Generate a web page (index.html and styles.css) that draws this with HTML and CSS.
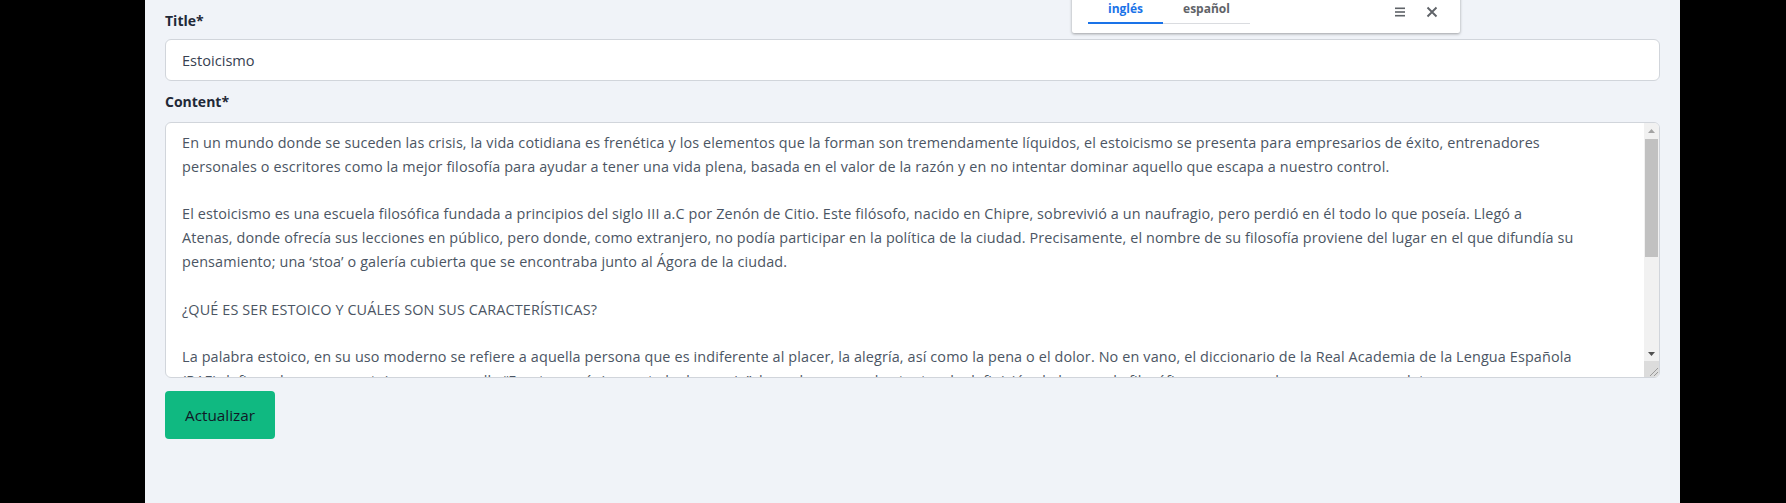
FILE: index.html
```html
<!DOCTYPE html>
<html lang="es">
<head>
<meta charset="utf-8">
<title>Editar post</title>
<link rel="stylesheet" href="styles.css">
</head>
<body>
<div class="panel">
  <form class="form">
    <div class="field">
      <label class="label" for="title">Title*</label>
      <input class="input" id="title" type="text" value="Estoicismo">
    </div>
    <div class="field">
      <label class="label" for="content">Content*</label>
      <div class="textarea-wrap">
        <textarea class="textarea" id="content" wrap="off">En un mundo donde se suceden las crisis, la vida cotidiana es frenética y los elementos que la forman son tremendamente líquidos, el estoicismo se presenta para empresarios de éxito, entrenadores
personales o escritores como la mejor filosofía para ayudar a tener una vida plena, basada en el valor de la razón y en no intentar dominar aquello que escapa a nuestro control.

El estoicismo es una escuela filosófica fundada a principios del siglo III a.C por Zenón de Citio. Este filósofo, nacido en Chipre, sobrevivió a un naufragio, pero perdió en él todo lo que poseía. Llegó a
Atenas, donde ofrecía sus lecciones en público, pero donde, como extranjero, no podía participar en la política de la ciudad. Precisamente, el nombre de su filosofía proviene del lugar en el que difundía su
pensamiento; una ‘stoa’ o galería cubierta que se encontraba junto al Ágora de la ciudad.

¿QUÉ ES SER ESTOICO Y CUÁLES SON SUS CARACTERÍSTICAS?

La palabra estoico, en su uso moderno se refiere a aquella persona que es indiferente al placer, la alegría, así como la pena o el dolor. No en vano, el diccionario de la Real Academia de la Lengua Española
(RAE) define a la persona estoica como aquella “Fuerte, ecuánime ante la desgracia”, lo cual se acerca bastante a la definición de la escuela filosófica, aunque no la recoge por completo.

Para los estoicos, la virtud es el único bien verdadero y la felicidad consiste en vivir de acuerdo con la naturaleza y la razón,
aceptando con serenidad aquello que no depende de nosotros y actuando con firmeza sobre lo que sí está a nuestro alcance.

Entre sus principales representantes se encuentran Séneca, Epicteto y el emperador Marco Aurelio, cuyas obras siguen
siendo leídas hoy en día por quienes buscan una guía práctica para afrontar las dificultades de la vida,
y cuyas enseñanzas se resumen en distinguir entre lo que depende de nosotros y lo que no.</textarea>
        <div class="scrollbar" aria-hidden="true">
          <div class="sb-btn">
            <svg width="7" height="4" viewBox="0 0 7 4"><path d="M0 4 L3.5 0 L7 4 Z" fill="#a3a3a3"/></svg>
          </div>
          <div class="sb-track">
            <div class="sb-thumb"></div>
          </div>
          <div class="sb-btn">
            <svg width="7" height="4" viewBox="0 0 7 4"><path d="M0 0 L7 0 L3.5 4 Z" fill="#505050"/></svg>
          </div>
          <div class="sb-corner">
            <svg width="15" height="16" viewBox="0 0 15 16"><path d="M14 7 L6 15 M14 11 L10 15" stroke="#9a9a9a" stroke-width="1" fill="none"/></svg>
          </div>
        </div>
      </div>
    </div>
    <div class="actions">
      <button class="btn" type="button">Actualizar</button>
    </div>
  </form>

  <div class="translate">
    <div class="tabs">
      <span class="tab tab-active">inglés</span>
      <span class="tab">español</span>
    </div>
    <div class="tools">
      <svg class="icon" width="12" height="12" viewBox="0 0 12 12" aria-hidden="true">
        <rect x="1" y="1.5" width="10" height="1.6" fill="#5f6368"/>
        <rect x="1" y="5.2" width="10" height="1.6" fill="#5f6368"/>
        <rect x="1" y="8.9" width="10" height="1.6" fill="#5f6368"/>
      </svg>
      <svg class="icon" width="12" height="12" viewBox="0 0 12 12" aria-hidden="true">
        <path d="M1.5 1.5 L10.5 10.5 M10.5 1.5 L1.5 10.5" stroke="#5f6368" stroke-width="1.9" fill="none"/>
      </svg>
    </div>
  </div>
</div>
</body>
</html>
```
FILE: styles.css
```css
html, body {
  margin: 0;
  padding: 0;
  height: 100%;
}

body {
  background: #000;
  font-family: "Open Sans", "Noto Sans", sans-serif;
  overflow: hidden;
}

.panel {
  position: relative;
  margin-left: 145px;
  width: 1535px;
  height: 503px;
  background: #f0f3f8;
  box-sizing: border-box;
  padding: 11px 20px 0 20px;
}

.form {
  display: flex;
  flex-direction: column;
}

.field {
  display: flex;
  flex-direction: column;
  margin-bottom: 11px;
}

.label {
  font-size: 14px;
  line-height: 20px;
  font-weight: 700;
  color: #1f2937;
  margin-bottom: 8px;
}

.field + .field .label {
  margin-bottom: 10px;
}

.input {
  display: block;
  box-sizing: border-box;
  height: 42px;
  width: 100%;
  margin: 0;
  padding: 0 16px;
  border: 1px solid #d1d5db;
  border-radius: 6px;
  background: #fff;
  font-family: "Open Sans", "Noto Sans", sans-serif;
  font-size: 14.6px;
  color: #374151;
  outline: none;
}

.textarea-wrap {
  position: relative;
}

.textarea {
  display: block;
  box-sizing: border-box;
  width: 100%;
  height: 256px;
  margin: 0;
  padding: 8px 31px 8px 16px;
  border: 1px solid #d1d5db;
  border-radius: 6px;
  background: #fff;
  font-family: "Open Sans", "Noto Sans", sans-serif;
  font-size: 14.4px;
  letter-spacing: 0.13px;
  line-height: 23.8px;
  color: #4b5563;
  white-space: pre;
  overflow: hidden;
  resize: none;
  outline: none;
}

.scrollbar {
  position: absolute;
  top: 1px;
  right: 1px;
  bottom: 1px;
  width: 15px;
  display: flex;
  flex-direction: column;
  background: #f1f1f1;
  border-top-right-radius: 5px;
  border-bottom-right-radius: 5px;
  overflow: hidden;
}

.sb-btn {
  height: 15px;
  flex: none;
  display: flex;
  align-items: center;
  justify-content: center;
}

.sb-btn svg {
  display: block;
}

.sb-track {
  flex: 1;
  padding: 1px 1px 0 1px;
}

.sb-thumb {
  height: 118px;
  background: #c1c1c1;
}

.sb-corner {
  height: 16px;
  flex: none;
  background: #dcdcdc;
}

.sb-corner svg {
  display: block;
}

.actions {
  display: flex;
  margin-top: 2px;
}

.btn {
  height: 48px;
  padding: 0 20px;
  border: none;
  border-radius: 4px;
  background: #10b981;
  color: #111827;
  font-family: "Open Sans", "Noto Sans", sans-serif;
  font-size: 15.3px;
  cursor: pointer;
}

.translate {
  position: absolute;
  top: -10px;
  left: 927px;
  width: 388px;
  height: 43px;
  box-sizing: border-box;
  padding: 10px 16px 0 16px;
  background: #fff;
  border-radius: 0 0 2px 2px;
  box-shadow: 0 1px 3px rgba(0, 0, 0, 0.35);
  display: flex;
  align-items: flex-start;
  justify-content: space-between;
}

.tabs {
  display: flex;
  border-bottom: 1px solid #dadce0;
}

.tab {
  padding: 0 20px;
  height: 24px;
  line-height: 18px;
  font-size: 12px;
  font-weight: 700;
  color: #5f6368;
  box-sizing: border-box;
  margin-bottom: -1px;
  border-bottom: 2px solid transparent;
}

.tab-active {
  color: #1a73e8;
  border-bottom-color: #1a73e8;
}

.tools {
  display: flex;
  gap: 20px;
  margin-top: 6px;
  margin-right: 6px;
}

.icon {
  display: block;
}
```
